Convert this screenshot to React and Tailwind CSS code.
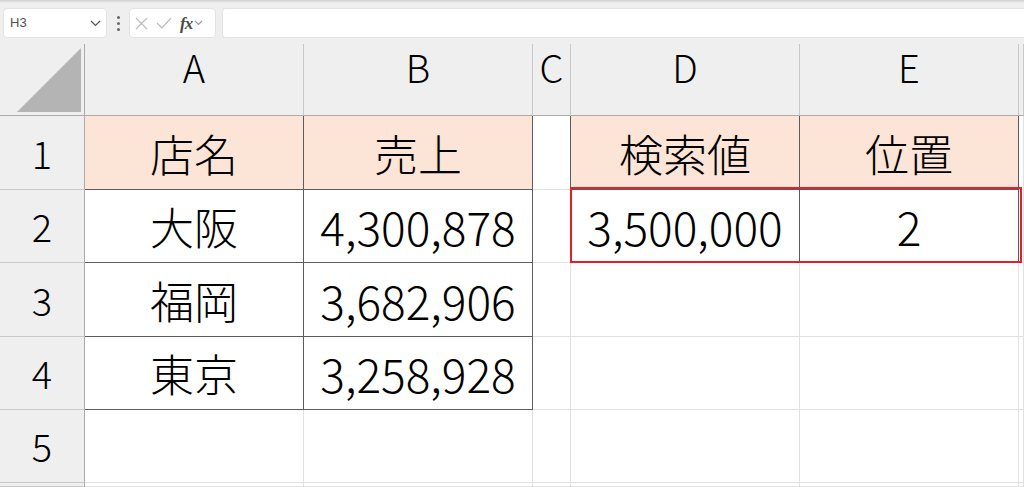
import clsx from 'clsx';

const FONT = "font-['Noto_Sans_CJK_JP','Noto_Sans',sans-serif]";

const columns = ['A', 'B', 'C', 'D', 'E', ''];

// each row: [A, B, C, D, E, F] ; kind: 'fill' | 'box' | 'edge' | null
const rows = [
  [
    { t: '店名', kind: 'fill' },
    { t: '売上', kind: 'fill' },
    { kind: 'edge' },
    { t: '検索値', kind: 'fill' },
    { t: '位置', kind: 'fill' },
    {},
  ],
  [
    { t: '大阪', kind: 'box' },
    { t: '4,300,878', kind: 'box', num: true },
    { kind: 'edge' },
    { t: '3,500,000', kind: 'box', num: true },
    { t: '2', kind: 'box', num: true },
    {},
  ],
  [
    { t: '福岡', kind: 'box' },
    { t: '3,682,906', kind: 'box', num: true },
    {},
    {},
    {},
    {},
  ],
  [
    { t: '東京', kind: 'box' },
    { t: '3,258,928', kind: 'box', num: true },
    {},
    {},
    {},
    {},
  ],
  [{}, {}, {}, {}, {}, {}],
  [{}, {}, {}, {}, {}, {}],
];

function Cell({ t, kind, num }) {
  return (
    <div
      className={clsx(
        'flex items-center justify-center border-r border-b overflow-hidden',
        kind === 'fill' ? 'bg-[#fce4d6]' : 'bg-white',
        kind === 'fill' || kind === 'box'
          ? 'border-[#5c5c5c]'
          : kind === 'edge'
          ? 'border-r-[#5c5c5c] border-b-[#e1e1e1]'
          : 'border-[#e1e1e1]'
      )}
    >
      {t && (
        <span className={clsx('font-light leading-none text-black', num ? 'text-[46px]' : 'text-[44px]')}>
          {t}
        </span>
      )}
    </div>
  );
}

function Toolbar() {
  return (
    <div className="h-[44px] flex flex-col">
      <div className="h-[3px] bg-linear-to-b from-[#cfcfcf] to-[#efefef]" />
      <div className="flex items-center h-[30px] mt-[5px] font-['Liberation_Sans',sans-serif]">
        <div className="ml-[3px] w-[104px] h-[30px] bg-white border border-[#e3e3e3] rounded-[4px] flex items-center pl-[6px] pr-[5px]">
          <span className="text-[13px] text-[#505050] flex-1">H3</span>
          <svg width="11" height="7" viewBox="0 0 11 7" fill="none" stroke="#555" strokeWidth="1.2">
            <path d="M1 1l4.5 4.5L10 1" />
          </svg>
        </div>
        <div className="w-[22px] flex flex-col items-center gap-[3px]">
          <span className="w-[3px] h-[3px] rounded-full bg-[#666]" />
          <span className="w-[3px] h-[3px] rounded-full bg-[#666]" />
          <span className="w-[3px] h-[3px] rounded-full bg-[#666]" />
        </div>
        <div className="w-[87px] h-[30px] bg-white border border-[#e3e3e3] rounded-[4px] flex items-center pl-[5px] gap-[8px]">
          <svg width="13" height="13" viewBox="0 0 13 13" fill="none" stroke="#bdbdbd" strokeWidth="1.2">
            <path d="M1 1l11 11M12 1L1 12" />
          </svg>
          <svg width="16" height="12" viewBox="0 0 16 12" fill="none" stroke="#bdbdbd" strokeWidth="1.2">
            <path d="M1 6l5 5L15 1" />
          </svg>
          <span className="flex items-center gap-[2px]">
            <span className="font-['Liberation_Serif',serif] italic font-bold text-[17px] leading-none text-[#4a4a4a] tracking-[-1px]">fx</span>
            <svg width="9" height="6" viewBox="0 0 9 6" fill="none" stroke="#9a9a9a" strokeWidth="1.1">
              <path d="M1 1l3.5 3.5L8 1" />
            </svg>
          </span>
        </div>
        <div className="ml-[6px] flex-1 h-[30px] bg-white border border-[#e3e3e3] border-r-0 rounded-l-[4px]" />
      </div>
    </div>
  );
}

export default function App() {
  return (
    <div className={clsx('relative w-[1024px] h-[487px] overflow-hidden bg-[#efefef]', FONT)}>
      <Toolbar />
      <div className="grid grid-cols-[85px_219px_229px_38px_229px_219px_1fr] grid-rows-[72px_74px_73px_74px_73px_73px_1fr] h-[443px]">
        <div className="bg-[#efefef] border-r border-b border-[#ababab] relative">
          <svg className="absolute left-[17px] top-[4px]" width="64" height="64" viewBox="0 0 64 64">
            <path d="M0 64L64 0V64Z" fill="#b4b4b4" />
          </svg>
        </div>
        {columns.map((c, i) => (
          <div
            key={i}
            className="bg-[#efefef] border-r border-r-[#c8c8c8] border-b border-b-[#ababab] flex justify-center pt-[4px]"
          >
            <span className="text-[38px] font-light leading-none text-black">{c}</span>
          </div>
        ))}
        {rows.map((r, ri) => [
          <div
            key={`h${ri}`}
            className="bg-[#efefef] border-r border-r-[#ababab] border-b border-b-[#c8c8c8] flex items-center justify-center"
          >
            <span className="text-[38px] font-light leading-none text-black">{ri < 5 ? ri + 1 : ''}</span>
          </div>,
          ...r.map((cell, ci) => <Cell key={`${ri}-${ci}`} {...cell} />),
        ])}
      </div>
      <div className="absolute left-[570px] top-[187px] w-[452px] h-[76px] border-2 border-[#ec1c24] pointer-events-none" />
    </div>
  );
}
